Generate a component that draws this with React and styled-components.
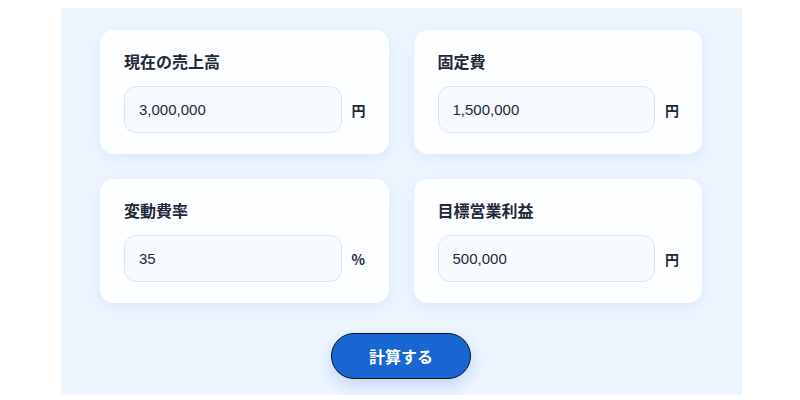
import React from 'react';
import styled, { createGlobalStyle } from 'styled-components';

const GlobalStyle = createGlobalStyle`
  body {
    margin: 8px;
    background: #ffffff;
    font-family: "Liberation Sans", "Noto Sans CJK JP", sans-serif;
    color: #1f2937;
  }
`

const Panel = styled.div`
  width: 681px;
  box-sizing: border-box;
  margin-left: 53px;
  padding: 22px 40px 16px 39px;
  background: #edf5ff;
  display: flex;
  flex-direction: column;
  align-items: center;
`

const Grid = styled.div`
  width: 100%;
  display: grid;
  grid-template-columns: minmax(0, 1fr) minmax(0, 1fr);
  gap: 25px;
`

const Card = styled.div`
  background: #fdfeff;
  border-radius: 14px;
  padding: 20px 23px 21px 24px;
  box-shadow: 0 4px 14px rgba(120, 160, 220, 0.14);
`

const Label = styled.div`
  font-family: "Noto Sans CJK JP", sans-serif;
  font-weight: 700;
  font-size: 16px;
  line-height: 22px;
  color: #1f2937;
  margin-bottom: 14px;
`

const Row = styled.div`
  display: flex;
  align-items: center;
  gap: 10px;
`

const Input = styled.input`
  flex: 1;
  min-width: 0;
  width: 0;
  height: 47px;
  box-sizing: border-box;
  padding: 0 14px;
  border: 1px solid #d9e5f5;
  border-radius: 12px;
  background: #f7faff;
  font-family: "Liberation Sans", sans-serif;
  font-size: 15px;
  color: #1f2937;
  outline: none;
`

const Unit = styled.span`
  width: 14px;
  font-family: "Noto Sans CJK JP", sans-serif;
  font-weight: 700;
  font-size: 14px;
  color: #1f2937;
`

const Button = styled.button`
  margin-top: 30px;
  width: 140px;
  height: 46px;
  border: 1.5px solid #111111;
  border-radius: 999px;
  background: #1766d2;
  color: #ffffff;
  font-family: "Noto Sans CJK JP", sans-serif;
  font-weight: 700;
  font-size: 16px;
  box-shadow: 0 6px 16px rgba(23, 102, 210, 0.22);
  cursor: pointer;
`

const fields = [
  { label: '現在の売上高', value: '3,000,000', unit: '円' },
  { label: '固定費', value: '1,500,000', unit: '円' },
  { label: '変動費率', value: '35', unit: '%' },
  { label: '目標営業利益', value: '500,000', unit: '円' },
];

const App = () => {
  return (
    <>
      <GlobalStyle />
      <Panel>
        <Grid>
          {fields.map((f) => (
            <Card key={f.label}>
              <Label>{f.label}</Label>
              <Row>
                <Input defaultValue={f.value} />
                <Unit>{f.unit}</Unit>
              </Row>
            </Card>
          ))}
        </Grid>
        <Button>計算する</Button>
      </Panel>
    </>
  );
}

export default App;
